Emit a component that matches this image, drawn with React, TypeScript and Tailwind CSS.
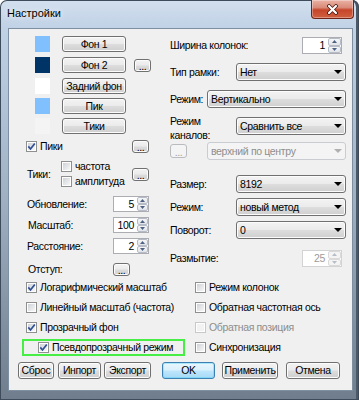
import React from 'react';

const btnFace =
  'border-[#707070] bg-[linear-gradient(to_bottom,#f3f3f3_0%,#ebebeb_48%,#dddddd_52%,#cfcfcf_100%)] shadow-[inset_0_0_0_1px_#fcfcfc] text-black';

function Btn({
  children,
  className = '',
  disabled = false,
  primary = false,
}: {
  children: React.ReactNode;
  className?: string;
  disabled?: boolean;
  primary?: boolean;
}) {
  const tone = disabled
    ? 'border-[#b9bcbf] bg-[#f4f4f4] text-[#a0a0a0]'
    : primary
      ? 'border-[#3c7fb1] bg-[linear-gradient(to_bottom,#eaf6fd_0%,#d9f0fc_48%,#bee6fd_52%,#a7d9f5_100%)] shadow-[inset_0_0_0_1px_#48d2fd66] text-black'
      : btnFace;
  return (
    <div className={`flex shrink-0 items-center justify-center rounded-[3px] border leading-none ${tone} ${className}`}>
      {children}
    </div>
  );
}

function Dots({ className = '', disabled = false }: { className?: string; disabled?: boolean }) {
  return (
    <Btn className={`w-[17px] pt-[2px] ${className}`} disabled={disabled}>
      ...
    </Btn>
  );
}

function Select({ value, className = '', disabled = false }: { value: string; className?: string; disabled?: boolean }) {
  return (
    <div
      className={`flex h-[18px] shrink-0 items-center justify-between rounded-[3px] border pl-[3px] pr-[3px] ${
        disabled ? 'border-[#c9ccd0] bg-[#f4f4f4] text-[#8e8e8e]' : btnFace
      } ${className}`}
    >
      <span>{value}</span>
      <svg width="8" height="4" viewBox="0 0 8 4">
        <polygon points="0,0 8,0 4,4" fill={disabled ? '#b0b0b0' : '#000'} />
      </svg>
    </div>
  );
}

function Spin({
  value,
  className = '',
  arrows = 'w-[12px]',
  disabled = false,
}: {
  value: string;
  className?: string;
  arrows?: string;
  disabled?: boolean;
}) {
  const tri = disabled ? '#b8bec8' : '#4d6185';
  const half = `flex flex-1 items-center justify-center rounded-[2px] border ${
    disabled ? 'border-[#dadada] bg-[#f4f4f4]' : 'border-[#b5bcc7] bg-[linear-gradient(to_bottom,#f6f6f6,#e2e4e8)]'
  }`;
  return (
    <div className={`flex shrink-0 ${className}`}>
      <div
        className={`flex flex-1 items-center justify-end border border-r-0 bg-white pr-[3px] ${
          disabled ? 'border-[#d3d3d3] text-[#9c9c9c]' : 'border-[#abadb3] text-black'
        }`}
      >
        {value}
      </div>
      <div className={`flex flex-col border-y border-r bg-white ${disabled ? 'border-[#d3d3d3]' : 'border-[#abadb3]'} ${arrows}`}>
        <div className={half}>
          <svg width="5" height="3" viewBox="0 0 5 3">
            <polygon points="0,3 5,3 2.5,0" fill={tri} />
          </svg>
        </div>
        <div className={half}>
          <svg width="5" height="3" viewBox="0 0 5 3">
            <polygon points="0,0 5,0 2.5,3" fill={tri} />
          </svg>
        </div>
      </div>
    </div>
  );
}

function Check({ checked = false, disabled = false }: { checked?: boolean; disabled?: boolean }) {
  return (
    <div className={`relative h-[11px] w-[11px] shrink-0 border bg-white p-[1px] ${disabled ? 'border-[#c8c8c8]' : 'border-[#8e8f8f]'}`}>
      <div className={`h-full w-full ${disabled ? 'bg-[#f2f2f2]' : 'bg-[linear-gradient(135deg,#cfd2d7,#f7f7f7)]'}`} />
      {checked && (
        <svg className="absolute -left-[1px] -top-[1px]" width="11" height="11" viewBox="0 0 11 11">
          <path d="M2.3 5.4 L4.5 8 L8.8 2.4" fill="none" stroke="#2f4f95" strokeWidth="1.7" />
        </svg>
      )}
    </div>
  );
}

function CheckRow({ label, checked = false, disabled = false }: { label: string; checked?: boolean; disabled?: boolean }) {
  return (
    <div className="flex items-center gap-[3px]">
      <Check checked={checked} disabled={disabled} />
      <span className={disabled ? 'text-[#8d8d8d]' : ''}>{label}</span>
    </div>
  );
}

const colorRows = [
  { swatch: 'bg-[#80c0ff]', label: 'Фон 1', gap: 'mt-0', dots: false },
  { swatch: 'bg-[#003366]', label: 'Фон 2', gap: 'mt-[5px]', dots: true },
  { swatch: 'bg-[#ffffff]', label: 'Задний фон', gap: 'mt-[5px]', dots: false },
  { swatch: 'bg-[#80c0ff]', label: 'Пик', gap: 'mt-[4px]', dots: false },
  { swatch: 'bg-[#f4f4f4]', label: 'Тики', gap: 'mt-[4px]', dots: false },
];

export default function App() {
  return (
    <div className="h-[400px] w-[359px] overflow-hidden whitespace-nowrap rounded-t-[7px] bg-[linear-gradient(to_bottom,#d3e0ee_0px,#c0d2e6_28px,#9fb0c3_200px,#6f7d8c_400px)] font-['Liberation_Sans',Arial,sans-serif] text-[10.5px] leading-[13px] tracking-[-0.35px] text-black shadow-[inset_0_0_0_1px_#3e4b5a,inset_-3px_0_0_#4a5868]">
      {/* title bar */}
      <div className="flex h-[28px] items-start justify-between">
        <span className="ml-[7px] mt-[7px] text-[11px] tracking-normal [text-shadow:0_0_6px_#ffffff]">Настройки</span>
        <div className="mr-[5px] flex h-[19px] w-[43px] items-center justify-center rounded-b-[4px] border border-t-0 border-[#6e2418] bg-[linear-gradient(to_bottom,#eab2a6_0%,#d98a78_42%,#c5452b_55%,#d0603f_100%)] shadow-[inset_0_0_0_1px_#ffffff55]">
          <svg width="13" height="11" viewBox="0 0 13 11">
            <path d="M3 2 L10 9 M10 2 L3 9" stroke="#4a1a12" strokeWidth="3.8" strokeLinecap="round" />
            <path d="M3 2 L10 9 M10 2 L3 9" stroke="#ffffff" strokeWidth="2.2" strokeLinecap="round" />
          </svg>
        </div>
      </div>

      {/* client area */}
      <div className="ml-[8px] h-[363px] w-[345px] border border-[#7f8fa2] bg-[#f0f0f0] pt-[7px]">
        <div className="pl-[17px]">
          <div className="flex">
            {/* left column */}
            <div className="flex w-[144px] flex-col">
              {colorRows.map((r) => (
                <div key={r.label} className={`flex h-[16px] items-center ${r.gap}`}>
                  <div className={`ml-[9px] h-[16px] w-[15px] ${r.swatch}`} />
                  <Btn className="ml-[12px] h-[16px] w-[64px]">{r.label}</Btn>
                  {r.dots && <Dots className="ml-[8px] h-[13px]" />}
                </div>
              ))}

              <div className="mt-[6px] flex h-[13px] w-[123px] items-center">
                <div className="flex-1">
                  <CheckRow label="Пики" checked />
                </div>
                <Dots className="h-[13px]" />
              </div>

              <div className="mt-[7px] flex w-[123px] items-center">
                <span className="w-[35px] pl-[1px]">Тики:</span>
                <div className="flex flex-1 flex-col gap-[2px]">
                  <div className="flex h-[13px] items-center">
                    <CheckRow label="частота" />
                  </div>
                  <div className="flex h-[13px] items-center">
                    <CheckRow label="амплитуда" />
                  </div>
                </div>
                <Dots className="h-[13px]" />
              </div>

              <div className="mt-[8px] flex h-[16px] w-[123px] items-center">
                <span className="flex-1 pl-[1px]">Обновление:</span>
                <Spin value="5" className="h-[16px] w-[36px]" />
              </div>
              <div className="mt-[5px] flex h-[16px] w-[123px] items-center">
                <span className="flex-1 pl-[2px]">Масштаб:</span>
                <Spin value="100" className="h-[16px] w-[36px]" />
              </div>
              <div className="mt-[5px] flex h-[16px] w-[123px] items-center">
                <span className="flex-1 pl-[1px]">Расстояние:</span>
                <Spin value="2" className="h-[16px] w-[36px]" />
              </div>
              <div className="mt-[9px] flex h-[13px] w-[104px] items-center">
                <span className="flex-1 pl-[2px]">Отступ:</span>
                <Dots className="h-[13px]" />
              </div>
            </div>

            {/* right column */}
            <div className="flex w-[176px] flex-col">
              <div className="mt-[1px] flex h-[17px] items-center">
                <span className="flex-1">Ширина колонок:</span>
                <Spin value="1" className="mr-[4px] h-[17px] w-[40px]" arrows="w-[14px]" />
              </div>
              <div className="mt-[9px] flex h-[18px] items-center">
                <span className="flex-1">Тип рамки:</span>
                <Select value="Нет" className="w-[110px]" />
              </div>
              <div className="mt-[9px] flex h-[18px] items-center">
                <span className="flex-1">Режим:</span>
                <Select value="Вертикально" className="w-[139px]" />
              </div>
              <div className="mt-[9px] flex h-[18px] items-start">
                <span className="-mt-[3px] flex-1 leading-[14px]">
                  Режим
                  <br />
                  каналов:
                </span>
                <Select value="Сравнить все" className="w-[110px]" />
              </div>
              <div className="mt-[7px] flex h-[18px] items-center justify-between">
                <Dots className="h-[14px]" disabled />
                <Select value="верхний по центру" className="w-[139px]" disabled />
              </div>
              <div className="mt-[15px] flex h-[18px] items-center">
                <span className="flex-1">Размер:</span>
                <Select value="8192" className="w-[110px]" />
              </div>
              <div className="mt-[5px] flex h-[18px] items-center">
                <span className="flex-1">Режим:</span>
                <Select value="новый метод" className="w-[110px]" />
              </div>
              <div className="mt-[5px] flex h-[18px] items-center">
                <span className="flex-1">Поворот:</span>
                <Select value="0" className="w-[110px]" />
              </div>
              <div className="mt-[11px] flex h-[17px] items-center">
                <span className="flex-1">Размытие:</span>
                <Spin value="25" className="mr-[4px] h-[17px] w-[40px]" arrows="w-[14px]" disabled />
              </div>
            </div>
          </div>

          {/* options */}
          <div className="mt-[4px] grid grid-cols-[169px_1fr] gap-y-[6px]">
            <div className="flex h-[14px] items-center">
              <CheckRow label="Логарифмический масштаб" checked />
            </div>
            <div className="flex h-[14px] items-center">
              <CheckRow label="Режим колонок" />
            </div>
            <div className="flex h-[14px] items-center">
              <CheckRow label="Линейный масштаб (частота)" />
            </div>
            <div className="flex h-[14px] items-center">
              <CheckRow label="Обратная частотная ось" />
            </div>
            <div className="flex h-[14px] items-center">
              <CheckRow label="Прозрачный фон" checked />
            </div>
            <div className="flex h-[14px] items-center">
              <CheckRow label="Обратная позиция" disabled />
            </div>
            <div className="flex h-[14px] items-center">
              <div className="-ml-[4px] flex h-[17px] w-[163px] shrink-0 items-center border-2 border-[#46ee46] pl-[14px]">
                <CheckRow label="Псевдопрозрачный режим" checked />
              </div>
            </div>
            <div className="flex h-[14px] items-center">
              <CheckRow label="Синхронизация" />
            </div>
          </div>
        </div>

        {/* buttons */}
        <div className="mt-[8px] flex pl-[9px]">
          <Btn className="h-[17px] w-[36px]">Сброс</Btn>
          <Btn className="ml-[4px] h-[17px] w-[43px]">Инпорт</Btn>
          <Btn className="ml-[3px] h-[17px] w-[47px]">Экспорт</Btn>
          <Btn className="ml-[11px] h-[17px] w-[53px]" primary>
            OK
          </Btn>
          <Btn className="ml-[7px] h-[17px] w-[56px]">Применить</Btn>
          <Btn className="ml-[8px] h-[17px] w-[54px]">Отмена</Btn>
        </div>
      </div>
    </div>
  );
}
